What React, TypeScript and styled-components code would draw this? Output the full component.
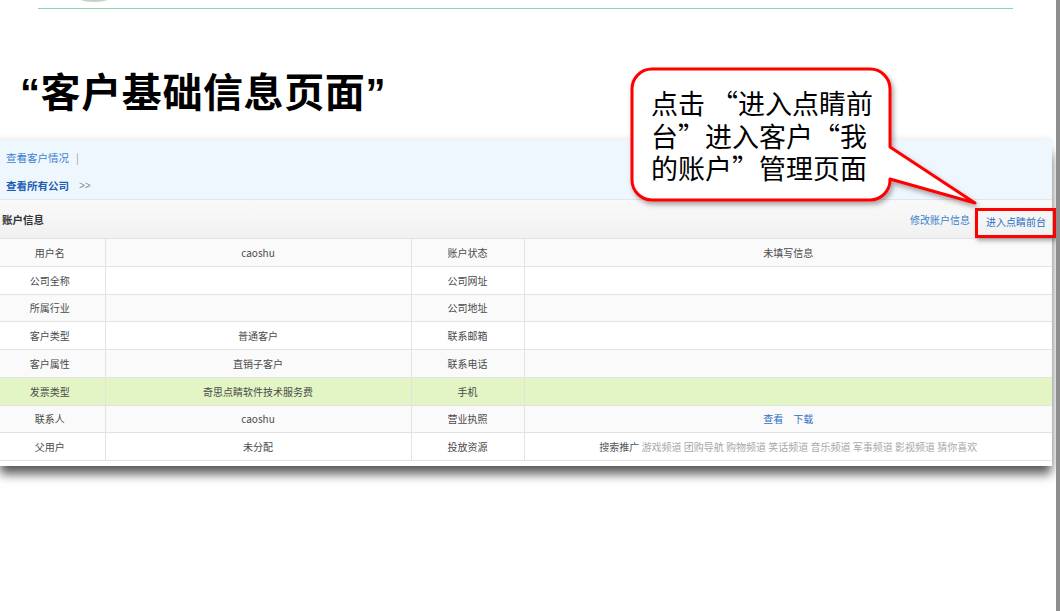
import { ReactNode } from 'react';
import styled, { createGlobalStyle } from 'styled-components';

const GlobalStyle = createGlobalStyle`
	html, body {
		margin: 0;
		padding: 0;
		background: #ffffff;
	}
	body {
		font-family: "Noto Sans CJK SC", "Noto Sans", sans-serif;
	}
`;

const cjk = `"Noto Sans CJK SC", "Noto Sans", sans-serif`;

type Tone = 'grey' | 'white' | 'green';

interface RowData {
	label: string,
	value?: string,
	label2: string,
	value2?: ReactNode,
	tone: Tone
}

function buildRows(): RowData[] {
	return [
		{ label: '用户名', value: 'caoshu', label2: '账户状态', value2: '未填写信息', tone: 'grey' },
		{ label: '公司全称', label2: '公司网址', tone: 'white' },
		{ label: '所属行业', label2: '公司地址', tone: 'grey' },
		{ label: '客户类型', value: '普通客户', label2: '联系邮箱', tone: 'white' },
		{ label: '客户属性', value: '直销子客户', label2: '联系电话', tone: 'grey' },
		{ label: '发票类型', value: '奇思点睛软件技术服务费', label2: '手机', tone: 'green' },
		{
			label: '联系人', value: 'caoshu', label2: '营业执照', tone: 'grey',
			value2: <><LinkText>查看</LinkText><LinkText>下载</LinkText></>
		},
		{
			label: '父用户', value: '未分配', label2: '投放资源', tone: 'white',
			value2: <><Strong>搜索推广</Strong> <Faint>游戏频道 团购导航 购物频道 笑话频道 音乐频道 军事频道 影视频道 猜你喜欢</Faint></>
		},
	];
}

export default function App() {
	const rows = buildRows();
	return (
		<>
			<GlobalStyle />
			<Page>
				<TopBar>
					<LogoArc width="44" height="3" viewBox="0 0 44 3">
						<ellipse cx="22" cy="-6" rx="21" ry="8" fill="#c9cfc9" />
					</LogoArc>
					<Rule />
				</TopBar>

				<Title>“客户基础信息页面”</Title>

				<Panel>
					<NavArea>
						<NavLine>
							<NavLink>查看客户情况</NavLink>
							<Pipe>|</Pipe>
						</NavLine>
						<NavLine>
							<NavLink $bold>查看所有公司</NavLink>
							<Arrows>&gt;&gt;</Arrows>
						</NavLine>
					</NavArea>

					<HeaderBar>
						<HeaderTitle>账户信息</HeaderTitle>
						<HeaderActions>
							<ActionLink>修改账户信息</ActionLink>
							<HighlightLink>进入点睛前台</HighlightLink>
						</HeaderActions>
					</HeaderBar>

					<InfoTable>
						<colgroup>
							<col style={{ width: 110 }} />
							<col style={{ width: 306 }} />
							<col style={{ width: 113 }} />
							<col />
						</colgroup>
						<tbody>
							{rows.map((r) => (
								<Row key={r.label} $tone={r.tone}>
									<Cell>{r.label}</Cell>
									<Cell>{r.value}</Cell>
									<Cell>{r.label2}</Cell>
									<Cell>{r.value2}</Cell>
								</Row>
							))}
						</tbody>
					</InfoTable>
				</Panel>

				<Callout>
					<CalloutShape width="370" height="160" viewBox="0 0 370 160">
						<defs>
							<filter id="cshadow" x="-10%" y="-10%" width="130%" height="130%">
								<feDropShadow dx="2" dy="3" stdDeviation="2.5" floodColor="#000" floodOpacity="0.35" />
							</filter>
						</defs>
						<path
							d="M32 9 H250 A20 20 0 0 1 270 29 V87 L355 143 L270 119 V120 A20 20 0 0 1 250 140 H32 A20 20 0 0 1 12 120 V29 A20 20 0 0 1 32 9 Z"
							fill="#ffffff"
							stroke="#ff0000"
							strokeWidth="3"
							strokeLinejoin="round"
							filter="url(#cshadow)"
						/>
					</CalloutShape>
					<CalloutText>
						点击 “进入点睛前<br />
						台”进入客户“我<br />
						的账户”管理页面
					</CalloutText>
				</Callout>
			</Page>
		</>
	);
}

const Page = styled.div`
	position: relative;
	width: 1056px;
	height: 611px;
	overflow: hidden;
	border-right: 4px solid #8e8e8e;
	background: #ffffff;
`;

const TopBar = styled.div`
	display: flex;
	flex-direction: column;
	height: 9px;
`;

const LogoArc = styled.svg`
	display: block;
	margin-left: 72px;
	height: 3px;
`;

const Rule = styled.div`
	margin: 5px 0 0 38px;
	width: 975px;
	height: 1px;
	background: #8ad5a9;
`;

const Title = styled.h1`
	margin: 64px 0 0 20px;
	height: 40px;
	font-family: "Liberation Sans", ${cjk};
	font-size: 40px;
	line-height: 40px;
	font-weight: 700;
	color: #000000;
	letter-spacing: 0.6px;
`;

const Panel = styled.div`
	margin: 27px 0 0 -5px;
	width: 1057px;
	padding-bottom: 5px;
	background: #ffffff;
	box-shadow: 0 -2px 6px rgba(0, 0, 0, 0.08), 2px 11px 10px -3px rgba(0, 0, 0, 0.65);
	font-family: ${cjk};
`;

const NavArea = styled.div`
	height: 60px;
	padding: 10px 0 0 11px;
	box-sizing: border-box;
	background: #eff7fe;
	border-bottom: 1px solid #e2e6ea;
	display: flex;
	flex-direction: column;
	gap: 13px;
`;

const NavLine = styled.div`
	display: flex;
	align-items: center;
	gap: 7px;
	height: 15px;
	font-size: 10.5px;
`;

const NavLink = styled.span<{ $bold?: boolean }>`
	color: ${(p) => (p.$bold ? '#1d5fb2' : '#3c7fcf')};
	font-weight: ${(p) => (p.$bold ? 700 : 400)};
`;

const Pipe = styled.span`
	color: #9a9a9a;
`;

const Arrows = styled.span`
	color: #8a8a8a;
	margin-left: 3px;
	font-family: "Liberation Sans", sans-serif;
	font-size: 10px;
`;

const HeaderBar = styled.div`
	height: 39px;
	display: flex;
	justify-content: space-between;
	align-items: stretch;
	background: linear-gradient(#f9f9f9, #f1f1f1);
	border-bottom: 1px solid #e2e2e2;
	box-sizing: border-box;
`;

const HeaderTitle = styled.div`
	display: flex;
	align-items: center;
	padding-left: 7px;
	font-size: 10.5px;
	font-weight: 700;
	color: #333333;
`;

const HeaderActions = styled.div`
	display: flex;
	align-items: center;
	gap: 5px;
	font-size: 10px;
`;

const ActionLink = styled.span`
	color: #3d7fcc;
`;

const HighlightLink = styled.span`
	align-self: flex-end;
	height: 30px;
	box-sizing: border-box;
	padding: 2px 7px 0 8px;
	display: flex;
	align-items: flex-start;
	line-height: 18px;
	border: 3px solid #ff0000;
	box-shadow: 2px 3px 4px rgba(0, 0, 0, 0.3);
	color: #2a6fc4;
	margin-right: -4px;
	position: relative;
	z-index: 1;
`;

const InfoTable = styled.table`
	width: 100%;
	table-layout: fixed;
	border-collapse: collapse;
	font-size: 10px;
	color: #4a4a4a;
`;

const rowBg: Record<Tone, string> = {
	grey: '#fafafa',
	white: '#ffffff',
	green: '#e3f5c4',
};

const Row = styled.tr<{ $tone: Tone }>`
	background: ${(p) => rowBg[p.$tone]};
`;

const Cell = styled.td`
	height: 26.75px;
	padding: 0;
	text-align: center;
	vertical-align: middle;
	border-right: 1px solid #e3e3e3;
	border-bottom: 1px solid #e3e3e3;
	white-space: nowrap;

	&:last-child {
		border-right: none;
	}
`;

const LinkText = styled.span`
	color: #2a6fc4;
	margin: 0 5px;
`;

const Strong = styled.span`
	color: #555555;
`;

const Faint = styled.span`
	color: #a8a8a8;
`;

const Callout = styled.div`
	position: absolute;
	left: 620px;
	top: 60px;
	width: 370px;
	height: 160px;
`;

const CalloutShape = styled.svg`
	position: absolute;
	left: 0;
	top: 0;
`;

const CalloutText = styled.div`
	position: absolute;
	left: 31px;
	top: 27px;
	font-family: ${cjk};
	font-size: 27px;
	line-height: 32.5px;
	color: #000000;
	white-space: nowrap;
`;
